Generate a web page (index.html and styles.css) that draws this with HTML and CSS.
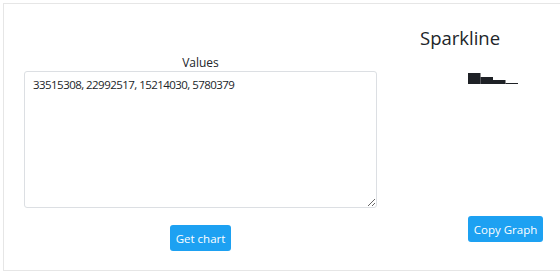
FILE: index.html
```html
<!DOCTYPE html>
<html lang="en">
<head>
    <meta charset="UTF-8">
    <meta name="viewport" content="width=device-width, initial-scale=1.0">
    <title>Sparkline</title>
    <link rel="stylesheet" href="styles.css">
</head>
<body>
    <div class="card">
        <div class="input-col">
            <label for="values">Values</label>
            <textarea id="values">33515308, 22992517, 15214030, 5780379</textarea>
            <button class="btn get-btn">Get chart</button>
        </div>

        <div class="chart-col">
            <h2>Sparkline</h2>
            <svg class="spark" width="50" height="11" viewBox="0 0 50 11">
                <rect x="0" y="0" width="12.5" height="11" fill="#1e2126"/>
                <rect x="12.5" y="4" width="12.5" height="7" fill="#1e2126"/>
                <rect x="25" y="7" width="12.5" height="4" fill="#1e2126"/>
                <rect x="37.5" y="10" width="12.5" height="1" fill="#1e2126"/>
            </svg>
            <button class="btn copy-btn">Copy Graph</button>
        </div>
    </div>
</body>
</html>
```

FILE: styles.css
```css
body {
    font-family: "Open Sans", "Noto Sans", sans-serif;
    color: #212529;
    margin: 0;
    overflow: hidden;
}

.card {
    display: flex;
    margin: 3px 0 0 3px;
    height: 266px;
    border: 1px solid #e6e6e6;
    border-right: none;
    background-color: #fff;
}

.input-col {
    display: flex;
    flex-direction: column;
    align-items: center;
    width: 353px;
    padding: 52px 0 0 20px;
}

label {
    font-size: 12px;
    line-height: 14px;
    margin-bottom: 1px;
}

textarea {
    box-sizing: border-box;
    width: 353px;
    height: 137px;
    padding: 5px 8px;
    border: 1px solid #dcdfe3;
    border-radius: 3px;
    font-family: inherit;
    font-size: 11.5px;
    letter-spacing: -0.55px;
    color: #212529;
    resize: vertical;
}

.btn {
    font-family: inherit;
    font-size: 11.5px;
    color: #fff;
    background-color: #1da1f2;
    border: none;
    border-radius: 3px;
    height: 26px;
    padding: 0;
    white-space: nowrap;
    cursor: pointer;
}

.get-btn {
    margin-top: 17px;
    width: 61px;
}

.chart-col {
    display: flex;
    flex-direction: column;
    align-items: flex-start;
    padding: 22px 0 0 43px;
}

h2 {
    font-size: 18.5px;
    font-weight: 400;
    line-height: 24px;
    margin: 0 0 23px 0;
}

.spark {
    display: block;
    margin-left: 48px;
}

.copy-btn {
    margin: 132px 0 0 48px;
    width: 75px;
}
```
